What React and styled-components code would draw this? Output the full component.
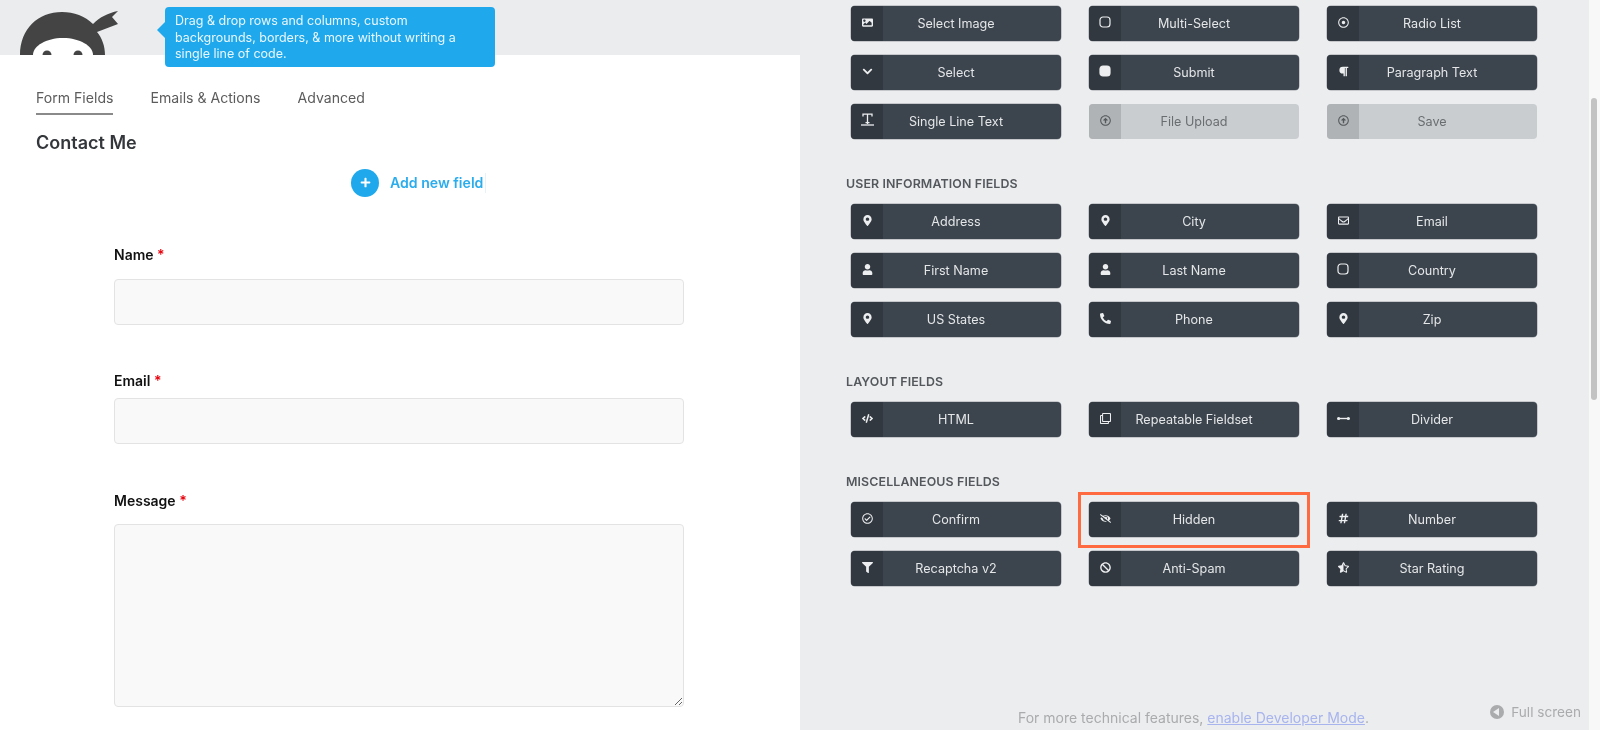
import React from "react";
import styled, { createGlobalStyle } from "styled-components";
import {
  FaImage, FaChevronDown, FaRegDotCircle, FaParagraph,
  FaMapMarkerAlt, FaUser, FaPhoneAlt, FaRegEnvelope, FaCode, FaRegClone,
  FaRegCheckCircle, FaEyeSlash, FaFilter, FaBan, FaHashtag, FaStarHalfAlt,
  FaRegArrowAltCircleUp, FaPlus,
} from "react-icons/fa";

const Global = createGlobalStyle`
  html, body { margin: 0; padding: 0; background: #fff; }
  * { box-sizing: border-box; }
`;

const Page = styled.div`
  display: flex;
  width: 1600px;
  height: 730px;
  overflow: hidden;
  font-family: Inter, "Liberation Sans", sans-serif;
  filter: blur(0.45px);
`;
const Left = styled.section`
  width: 800px;
  height: 730px;
  background: #fff;
  flex: none;
`;
const Header = styled.header`
  display: flex;
  height: 55px;
  background: #ebecee;
`;
const Logo = styled.svg`
  width: 125px;
  height: 55px;
  flex: none;
`;
const Tip = styled.div`
  position: relative;
  z-index: 1;
  margin: 7px 0 0 40px;
  width: 330px;
  height: 60px;
  padding: 6px 10px;
  border-radius: 4px;
  background: #1fa9ec;
  color: #e9f6fd;
  font-size: 12.5px;
  line-height: 16.5px;
  &::before {
    content: "";
    position: absolute;
    left: -8px;
    top: 15px;
    border-style: solid;
    border-width: 8px 8px 8px 0;
    border-color: transparent #1fa9ec transparent transparent;
  }
`;
const Body = styled.div`
  padding-left: 36px;
`;
const Tabs = styled.nav`
  display: flex;
  gap: 37px;
  margin-top: 34px;
`;
const Tab = styled.a`
  font-size: 14.1px;
  line-height: 17px;
  padding-bottom: 6.5px;
  color: #5c5c5c;
  border-bottom: 2px solid ${(p) => (p.$active ? "#8a8a8a" : "transparent")};
`;
const Title = styled.h1`
  margin: 17px 0 0;
  font-size: 18px;
  line-height: 22px;
  font-weight: 600;
  color: #33363a;
`;
const AddRow = styled.div`
  display: flex;
  align-items: center;
  gap: 11px;
  height: 28px;
  margin-top: 15px;
  padding-left: 315px;
`;
const AddCircle = styled.span`
  display: flex;
  align-items: center;
  justify-content: center;
  width: 28px;
  height: 28px;
  border-radius: 50%;
  background: #1fa9ec;
  color: #fff;
  font-size: 11px;
`;
const AddText = styled.span`
  font-size: 14.1px;
  font-weight: 600;
  color: #2aaced;
  padding-right: 2px;
  border-right: 1px solid #e6f2fa;
  line-height: 20px;
`;
const Form = styled.form`
  margin: 49px 0 0 78px;
  width: 570px;
`;
const Label = styled.label`
  display: block;
  font-size: 14px;
  line-height: 17px;
  font-weight: 600;
  color: #111;
  margin: ${(p) => p.$top}px 0 ${(p) => p.$bottom}px;
`;
const Req = styled.span`
  color: #e8000b;
`;
const TextInput = styled.input`
  display: block;
  width: 100%;
  height: 46px;
  background: #f9f9f9;
  border: 1.5px solid #e3e3e3;
  border-radius: 4px;
  outline: none;
`;
const TextArea = styled.textarea`
  display: block;
  width: 100%;
  height: 183px;
  background: #f9f9f9;
  border: 1.5px solid #e3e3e3;
  border-radius: 4px;
  outline: none;
  resize: vertical;
`;
const Right = styled.section`
  flex: 1;
  display: flex;
  height: 730px;
  background: #ecedef;
`;
const Content = styled.div`
  flex: 1;
  display: flex;
  flex-direction: column;
  padding: 6px 8px 4px 46px;
`;
const Heading = styled.h2`
  margin: 37px 0 12px;
  font-size: 12.4px;
  line-height: 16px;
  font-weight: 600;
  letter-spacing: 0.01em;
  text-transform: uppercase;
  color: #54585c;
`;
const Grid = styled.div`
  display: grid;
  grid-template-columns: repeat(3, 210px);
  column-gap: 28px;
  row-gap: 14px;
  padding-left: 5px;
`;
const Btn = styled.div`
  position: relative;
  display: grid;
  grid-template-columns: 32px 1fr 32px;
  align-items: center;
  height: 35px;
  border-radius: 4px;
  background: ${(p) => (p.$off ? "#cacdd0" : "#3c454d")};
  color: ${(p) => (p.$off ? "#6a6d70" : "#e4e6e8")};
  box-shadow: ${(p) => (p.$off ? "none" : "0 0 0 0.5px #9da2a7")};
  font-size: 12.6px;
  &::after {
    content: ${(p) => (p.$mark ? '""' : "none")};
    position: absolute;
    inset: -10px -11px -11px -11px;
    border: 3px solid #ff6a40;
  }
`;
const IconBox = styled.span`
  display: flex;
  align-items: center;
  justify-content: center;
  height: 100%;
  padding-bottom: 3px;
  border-radius: 4px 0 0 4px;
  font-size: 11px;
  background: ${(p) => (p.$off ? "#b0b3b6" : "#32383f")};
  color: ${(p) => (p.$off ? "#55585b" : "#eceef0")};
`;
const BtnText = styled.span`
  text-align: center;
  white-space: nowrap;
`;
const Footer = styled.footer`
  margin-top: auto;
  display: flex;
  justify-content: space-between;
  align-items: flex-start;
  padding-left: 172px;
  font-size: 13.6px;
  line-height: 16px;
  color: #a9abad;
`;
const Note = styled.p`
  margin: 6px 0 0;
  font-size: 14px;
`;
const DevLink = styled.a`
  color: #a7b4ee;
  text-decoration: underline;
`;
const Full = styled.div`
  display: flex;
  align-items: center;
  gap: 7px;
`;
const FullIcon = styled.span`
  position: relative;
  width: 14px;
  height: 14px;
  border-radius: 50%;
  background: #a9abad;
  &::before {
    content: "";
    position: absolute;
    left: 3px;
    top: 3px;
    border-style: solid;
    border-width: 4px 6px 4px 0;
    border-color: transparent #ecedef transparent transparent;
  }
`;
const Track = styled.aside`
  width: 11px;
  flex: none;
  padding: 98px 3px 0 2px;
  background: #f8f8f8;
`;
const Thumb = styled.div`
  height: 302px;
  border-radius: 3px;
  background: #c3c3c3;
`;

const ICursor = () => (
  <svg width="15" height="14" viewBox="0 0 15 14" fill="none" stroke="currentColor" strokeWidth="1.3">
    <path d="M3 3.5V1.2h9v2.3M7.5 1.2v9.8" />
    <path d="M1 12h13" />
    <path d="M5.5 9.6h4" />
  </svg>
);
const Divider = () => (
  <svg width="13" height="7" viewBox="0 0 13 7" fill="currentColor">
    <circle cx="1.6" cy="3.5" r="1.6" />
    <circle cx="11.4" cy="3.5" r="1.6" />
    <rect x="1" y="2.8" width="11" height="1.4" />
  </svg>
);
const RoundBox = ({ solid }) => (
  <svg width="12" height="12" viewBox="0 0 12 12" fill={solid ? "currentColor" : "none"} stroke="currentColor" strokeWidth="1.2">
    <rect x="1" y="1" width="10" height="10" rx="3" />
  </svg>
);

const groups = [
  {
    rows: [
      ["Select Image", <FaImage />],
      ["Multi-Select", <RoundBox />],
      ["Radio List", <FaRegDotCircle />],
      ["Select", <FaChevronDown />],
      ["Submit", <RoundBox solid />],
      ["Paragraph Text", <FaParagraph />],
      ["Single Line Text", <ICursor />],
      ["File Upload", <FaRegArrowAltCircleUp />, true],
      ["Save", <FaRegArrowAltCircleUp />, true],
    ],
  },
  {
    title: "User Information Fields",
    rows: [
      ["Address", <FaMapMarkerAlt />],
      ["City", <FaMapMarkerAlt />],
      ["Email", <FaRegEnvelope />],
      ["First Name", <FaUser />],
      ["Last Name", <FaUser />],
      ["Country", <RoundBox />],
      ["US States", <FaMapMarkerAlt />],
      ["Phone", <FaPhoneAlt />],
      ["Zip", <FaMapMarkerAlt />],
    ],
  },
  {
    title: "Layout Fields",
    rows: [
      ["HTML", <FaCode />],
      ["Repeatable Fieldset", <FaRegClone />],
      ["Divider", <Divider />],
    ],
  },
  {
    title: "Miscellaneous Fields",
    rows: [
      ["Confirm", <FaRegCheckCircle />],
      ["Hidden", <FaEyeSlash />, false, true],
      ["Number", <FaHashtag />],
      ["Recaptcha v2", <FaFilter />],
      ["Anti-Spam", <FaBan />],
      ["Star Rating", <FaStarHalfAlt />],
    ],
  },
];

export default function App() {
  return (
    <Page>
      <Global />
      <Left>
        <Header>
          <Logo viewBox="0 0 125 55">
            <path
              fill="#444"
              d="M20 55C20 29 38 12 62 12c12 0 23 4 31 12 7-7 15-11 25-13l-6 6 6 7-21 8c5 6 8 14 8 23Z"
            />
            <path fill="#fff" d="M33 55c0-9 13-17 30-17s30 8 30 17Z" />
            <circle cx="47" cy="55" r="4.5" fill="#444" />
            <circle cx="78" cy="55" r="4.5" fill="#444" />
          </Logo>
          <Tip>Drag &amp; drop rows and columns, custom backgrounds, borders, &amp; more without writing a single line of code.</Tip>
        </Header>
        <Body>
          <Tabs>
            <Tab $active>Form Fields</Tab>
            <Tab>Emails &amp; Actions</Tab>
            <Tab>Advanced</Tab>
          </Tabs>
          <Title>Contact Me</Title>
          <AddRow>
            <AddCircle><FaPlus /></AddCircle>
            <AddText>Add new field</AddText>
          </AddRow>
          <Form>
            <Label $top={0} $bottom={16}>Name <Req>*</Req></Label>
            <TextInput readOnly />
            <Label $top={47} $bottom={9}>Email <Req>*</Req></Label>
            <TextInput readOnly />
            <Label $top={48} $bottom={15}>Message <Req>*</Req></Label>
            <TextArea readOnly />
          </Form>
        </Body>
      </Left>
      <Right>
        <Content>
          {groups.map((g, i) => (
            <React.Fragment key={i}>
              {g.title && <Heading>{g.title}</Heading>}
              <Grid>
                {g.rows.map(([label, icon, off, mark]) => (
                  <Btn key={label} $off={off} $mark={mark}>
                    <IconBox $off={off}>{icon}</IconBox>
                    <BtnText>{label}</BtnText>
                  </Btn>
                ))}
              </Grid>
            </React.Fragment>
          ))}
          <Footer>
            <Note>For more technical features, <DevLink>enable Developer Mode</DevLink>.</Note>
            <Full><FullIcon />Full screen</Full>
          </Footer>
        </Content>
        <Track><Thumb /></Track>
      </Right>
    </Page>
  );
}
